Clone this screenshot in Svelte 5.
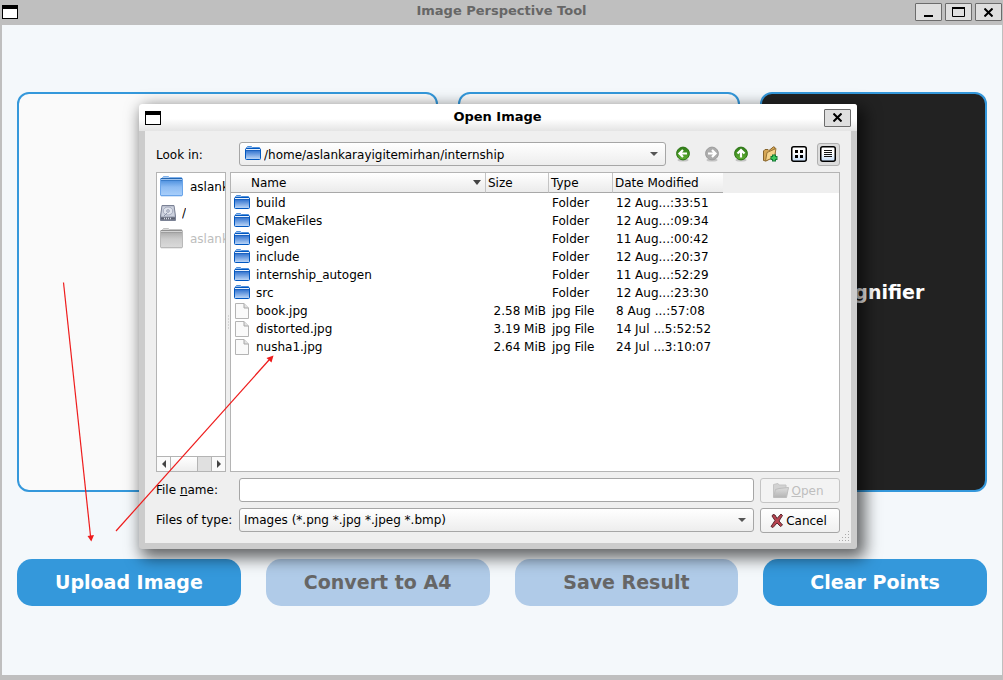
<script>
  const files = [
    { name: 'build', size: '', type: 'Folder', date: '12 Aug...:33:51' },
    { name: 'CMakeFiles', size: '', type: 'Folder', date: '12 Aug...:09:34' },
    { name: 'eigen', size: '', type: 'Folder', date: '11 Aug...:00:42' },
    { name: 'include', size: '', type: 'Folder', date: '12 Aug...:20:37' },
    { name: 'internship_autogen', size: '', type: 'Folder', date: '11 Aug...:52:29' },
    { name: 'src', size: '', type: 'Folder', date: '12 Aug...:23:30' },
    { name: 'book.jpg', size: '2.58 MiB', type: 'jpg File', date: '8 Aug ...:57:08' },
    { name: 'distorted.jpg', size: '3.19 MiB', type: 'jpg File', date: '14 Jul ...5:52:52' },
    { name: 'nusha1.jpg', size: '2.64 MiB', type: 'jpg File', date: '24 Jul ...3:10:07' }
  ];
  let fileName = $state('');
</script>

{#snippet windowIcon()}
  <svg class="window-icon" width="16" height="14" viewBox="0 0 16 14" aria-hidden="true">
    <rect x="0.5" y="0.5" width="15" height="13" fill="#fff" stroke="#000" />
    <rect width="16" height="4" />
  </svg>
{/snippet}

{#snippet cross()}
  <svg width="9" height="9" viewBox="0 0 9 9" aria-hidden="true">
    <path d="M0.5 0.5L8.500 8.500M8.500 0.500L0.500 8.500" stroke="#000" stroke-width="2" />
  </svg>
{/snippet}

{#snippet folder()}
  <svg width="16" height="16" viewBox="0 0 16 16" aria-hidden="true">
    <path d="M1.5 3V1.5L2.5 0.5H6.5L7.5 1.5H14.5V3" fill="#8db9ee" stroke="#4f90dc" />
    <rect x="0.5" y="2.500" width="15" height="11" rx="1" fill="url(#folder-blue)" stroke="#0057c0" />
    <path d="M1 3.500H15" stroke="#e8f1fc" />
    <path d="M1 4.500H15" stroke="#1c62c0" />
  </svg>
{/snippet}

{#snippet bigFolder(fill, line, tab, dark)}
  <svg width="24" height="22" viewBox="0 0 24 22" aria-hidden="true">
    <path d="M2.5 3V1.5L3.500 0.500H8.5L9.500 1.5H21.5V3" fill={tab} stroke={line} stroke-opacity=".8" />
    <rect x="0.5" y="2.5" width="22" height="17" rx="0.500" {fill} stroke={line} />
    <path d="M1 2.5H22" stroke={dark} />
    <path d="M1 3.5H22" stroke="#fff" stroke-opacity=".5" />
    <path d="M1 4.500H22" stroke={dark} stroke-opacity=".5" />
    <path d="M1 20.5H22" stroke={line} stroke-opacity=".3" />
  </svg>
{/snippet}

{#snippet roundArrow(ring, fill, turn)}
  <svg width="16" height="16" viewBox="0 0 16 16" aria-hidden="true">
    <ellipse cx="8" cy="14" rx="5.500" ry="1.500" fill="#000" fill-opacity=".18" />
    <circle cx="8" cy="7.5" r="6.4" {fill} stroke={ring} />
    <path d="M12 7.5H5M8 4L4.5 7.5L8 11" transform="rotate({turn} 8 7.5)" fill="none" stroke="#fff" stroke-width="2.2" />
  </svg>
{/snippet}

<svg class="defs" width="0" height="0" aria-hidden="true">
  <defs>
    <linearGradient id="folder-blue" x1="0" y1="0" x2="0" y2="1">
      <stop offset="0.1" stop-color="#2268cb" /><stop offset="1" stop-color="#c2daf8" />
    </linearGradient>
    <linearGradient id="folder-big" x1="0" y1="0" x2="0" y2="1">
      <stop offset="0" stop-color="#3f86da" /><stop offset="0.5" stop-color="#8dbcf3" /><stop offset="1" stop-color="#a9cffb" />
    </linearGradient>
    <linearGradient id="folder-grey" x1="0" y1="0" x2="0" y2="1">
      <stop offset="0" stop-color="#a4a4a4" /><stop offset="0.5" stop-color="#cccccc" /><stop offset="1" stop-color="#dadada" />
    </linearGradient>
    <linearGradient id="folder-open" x1="0" y1="0" x2="0" y2="1">
      <stop offset="0" stop-color="#ddd" /><stop offset="1" stop-color="#b4b4b4" />
    </linearGradient>
    <linearGradient id="arrow-green" x1="0" y1="0" x2="0" y2="1">
      <stop offset="0" stop-color="#2f7d18" /><stop offset="1" stop-color="#5fae32" />
    </linearGradient>
    <linearGradient id="view-blue" x1="0" y1="0" x2="0" y2="1">
      <stop offset="0.4" stop-color="#fff" /><stop offset="1" stop-color="#c5ddf8" />
    </linearGradient>
  </defs>
</svg>

<div class="window">
  <header class="title-bar">
    {@render windowIcon()}
    <h1>Image Perspective Tool</h1>
    <div class="window-buttons">
      <button class="frame-button" aria-label="Minimize">
        <svg width="9" height="9" viewBox="0 0 9 9" aria-hidden="true"><path d="M0 8H9" stroke="#000" stroke-width="2" /></svg>
      </button>
      <button class="frame-button" aria-label="Maximize">
        <svg width="13" height="10" viewBox="0 0 13 10" aria-hidden="true"><path d="M0.5 1V9.5H12.5V1" fill="none" stroke="#000" /><path d="M0 1H13" stroke="#000" stroke-width="2" /></svg>
      </button>
      <button class="frame-button" aria-label="Close">{@render cross()}</button>
    </div>
  </header>

  <main class="workspace">
    <div class="panels">
      <section class="panel"></section>
      <section class="panel"></section>
      <section class="panel magnifier">Magnifier</section>
    </div>
    <div class="actions">
      <button class="action">Upload Image</button>
      <button class="action" disabled>Convert to A4</button>
      <button class="action" disabled>Save Result</button>
      <button class="action">Clear Points</button>
    </div>
  </main>

  <div class="dialog" role="dialog" aria-labelledby="dialog-title">
    <header class="dialog-title">
      {@render windowIcon()}
      <h2 id="dialog-title">Open Image</h2>
      <button class="frame-button" aria-label="Close dialog">{@render cross()}</button>
    </header>

    <div class="dialog-body">
      <div class="look-in">
        <label for="look-in">Look in:</label>
        <div class="combo with-icon">
          {@render folder()}
          <select id="look-in"><option>/home/aslankarayigitemirhan/internship</option></select>
        </div>
        <div class="tools">
          <button class="tool" aria-label="Back">{@render roundArrow('#2c7414', 'url(#arrow-green)', 0)}</button>
          <button class="tool" aria-label="Forward">{@render roundArrow('#9c9c9c', '#acacac', 180)}</button>
          <button class="tool" aria-label="Parent directory">{@render roundArrow('#2c7414', 'url(#arrow-green)', 90)}</button>
          <button class="tool" aria-label="Create new folder">
            <svg width="16" height="16" viewBox="0 0 16 16" aria-hidden="true">
              <path d="M1.5 14.5V5L3 3.5H6L7 4.5L11.5 0.8L13 1.5V10L4 15Z" fill="#d5a655" stroke="#86642c" />
              <path d="M3.500 15L5 6.5L14 2.5L12.500 11Z" fill="#f5d38a" stroke="#9a7536" />
              <path d="M12 8.5V15.5M8.500 12H15.500" stroke="#147a35" stroke-width="4" />
              <path d="M12 9.5V14.5M9.500 12H14.500" stroke="#3ec85d" stroke-width="2" />
            </svg>
          </button>
          <button class="tool" aria-label="List view">
            <svg width="16" height="16" viewBox="0 0 16 16" aria-hidden="true">
              <rect x="0.75" y="0.75" width="14.5" height="14.5" rx="2" fill="url(#view-blue)" stroke="#000" stroke-width="1.5" />
              <path d="M4 4h3v3H4zM9 4h3v3H9zM4 9h3v3H4zM9 9h3v3H9z" />
            </svg>
          </button>
          <button class="tool pressed" aria-label="Detail view" aria-pressed="true">
            <svg width="16" height="16" viewBox="0 0 16 16" aria-hidden="true">
              <rect x="0.75" y="0.75" width="14.5" height="14.5" rx="2" fill="url(#view-blue)" stroke="#000" stroke-width="1.5" />
              <path d="M4 4.5H12M4 6.5H12M4 8.5H12M4 10.5H12" stroke="#111" />
            </svg>
          </button>
        </div>
      </div>

      <div class="browser">
        <nav class="places" aria-label="Places">
          <ul>
            <li>{@render bigFolder('url(#folder-big)', '#6aa5ea', '#a9caf0', '#2468b4')}<span>aslankarayigitemirhan</span></li>
            <li>
              <svg width="16" height="16" viewBox="0 0 16 16" aria-hidden="true">
                <path d="M2 0.5H14L15.5 11V15.5H0.5V11Z" fill="#aeb4c4" stroke="#7b8295" />
                <path d="M2.5 1.5H13.5L14.5 11H1.5Z" fill="#cdd2de" />
                <ellipse cx="8" cy="6" rx="4.8" ry="4" fill="#dfe3ec" stroke="#a4aabc" />
                <circle cx="8" cy="6" r="1.4" fill="#c3c8d6" stroke="#a4aabc" />
                <path d="M7 8L4 11" stroke="#8b93a8" />
                <path d="M1 13.5H15" stroke="#5c6272" stroke-width="2.5" />
                <path d="M4 13.5H12" stroke="#d6dae4" stroke-width="1.5" stroke-dasharray="1 1" />
              </svg>
              <span>/</span>
            </li>
            <li class="missing">{@render bigFolder('url(#folder-grey)', '#b9b9b9', '#d8d8d8', '#909090')}<span>aslankarayigit</span></li>
          </ul>
          <div class="scrollbar">
            <button aria-label="Scroll left"><svg width="4" height="8" viewBox="0 0 4 8" aria-hidden="true"><path d="M4 0V8L0 4Z" fill="#444" /></svg></button>
            <div class="track"><div class="thumb"></div></div>
            <button aria-label="Scroll right"><svg width="4" height="8" viewBox="0 0 4 8" aria-hidden="true"><path d="M0 0V8L4 4Z" fill="#444" /></svg></button>
          </div>
        </nav>
        <div class="splitter"></div>
        <div class="listing">
          <table>
            <colgroup><col class="c-name" /><col class="c-size" /><col class="c-type" /><col class="c-date" /><col /></colgroup>
            <thead>
              <tr>
                <th class="sorted">
                  <div>Name<svg width="8" height="5" viewBox="0 0 8 5" aria-hidden="true"><path d="M0 0H8L4 5Z" fill="#444" /></svg></div>
                </th>
                <th>Size</th><th>Type</th><th>Date Modified</th><td class="rest"></td>
              </tr>
            </thead>
            <tbody>
              {#each files as file}
                <tr>
                  <td>
                    <div class="file">
                      {#if file.size}
                        <svg width="16" height="16" viewBox="0 0 16 16" aria-hidden="true">
                          <path d="M1.5 0.5H10L14.5 5V15.5H1.5Z" fill="#fafafa" stroke="#b4b4b4" />
                          <path d="M10 0.5V5H14.5" fill="#e2e2e2" stroke="#a8a8a8" />
                        </svg>
                      {:else}
                        {@render folder()}
                      {/if}
                      <span>{file.name}</span>
                    </div>
                  </td>
                  <td class="size">{file.size}</td>
                  <td>{file.type}</td>
                  <td>{file.date}</td>
                  <td></td>
                </tr>
              {/each}
            </tbody>
          </table>
        </div>
      </div>

      <div class="fields">
        <label for="file-name">File <u>n</u>ame:</label>
        <input id="file-name" type="text" bind:value={fileName} />
        <button class="push" disabled>
          <svg width="16" height="16" viewBox="0 0 16 16" aria-hidden="true">
            <path d="M0.5 14V1.5L5 0.5L6 2H13V5" fill="#d2d2d2" stroke="#c4c4c4" />
            <path d="M0.5 14.5L2.5 6.5L6 5.5L15.5 4.5L13.5 14.5Z" fill="url(#folder-open)" stroke="#bdbdbd" />
          </svg>
          <span><u>O</u>pen</span>
        </button>
        <label for="file-type">Files of type:</label>
        <div class="combo">
          <select id="file-type"><option>Images (*.png *.jpg *.jpeg *.bmp)</option></select>
        </div>
        <button class="push">
          <svg width="14" height="16" viewBox="0 0 14 16" aria-hidden="true">
            <path d="M3 1.5L5 2L7 5.5L11 1L12.5 2.5L9 8L12.5 12L10.5 13.5L7 10L3 14.5L1 13.5L5 7.5L2 3Z" fill="#b8434f" stroke="#5a2a30" />
          </svg>
          <span>Cancel</span>
        </button>
      </div>
      <svg class="grip" width="12" height="12" viewBox="0 0 12 12" aria-hidden="true">
        <path d="M10 1h1v1h-1zM10 4h1v1h-1zM7 4h1v1h-1zM10 7h1v1h-1zM7 7h1v1h-1zM4 7h1v1h-1zM10 10h1v1h-1zM7 10h1v1h-1zM4 10h1v1h-1zM1 10h1v1h-1z" fill="#aaa" />
      </svg>
    </div>
  </div>

  <svg class="pointers" aria-hidden="true">
    <g fill="#ee1c1c" stroke="#ee1c1c" stroke-width="1.2">
      <path d="M63.5 282.5L90.5 536" />
      <path d="M87.5 536L94 535L91.3 541.500Z" stroke="none" />
      <path d="M116 531L269 360" />
      <path d="M266.500 358L271.500 362.5L273.500 355.500Z" stroke="none" />
    </g>
  </svg>
</div>

<style>
  :global(body) { margin: 0; }
  .window, .window button, .window input, .window select {
    font-family: "DejaVu Sans", Verdana, sans-serif;
    font-size: 12px;
    color: #000;
  }
  .window {
    position: relative;
    box-sizing: border-box;
    min-height: 100vh;
    display: flex;
    flex-direction: column;
    background: #f4f8fb;
    border: solid #bfbfbf;
    border-width: 0 1px 5px 2px;
    overflow: hidden;
  }
  .defs { position: absolute; }
  svg { display: block; flex: none; }
  button { margin: 0; padding: 0; }
  h1, h2 { flex: 1; margin: 0; font-size: 13px; line-height: 16px; font-weight: bold; text-align: center; }
  .title-bar { height: 25px; box-sizing: border-box; padding-bottom: 1px; display: flex; align-items: center; background: #bfbfbf; }
  h1 { color: #666; padding-left: 70px; padding-bottom: 2px; }
  h2 { padding: 0 0 2px 10px; }
  .window-buttons { display: flex; gap: 3px; }
  .frame-button {
    width: 27px; height: 18px;
    box-sizing: border-box;
    display: flex; align-items: center; justify-content: center;
    background: #dfdfdf; border: 1px solid #6c6c6c; border-radius: 1px;
  }
  .workspace {
    flex: 1;
    display: flex; flex-direction: column; justify-content: space-evenly;
    padding: 0 15px 2px;
  }
  .panels { display: grid; grid-template-columns: 421fr 282fr 227fr; gap: 20px; height: 400px; }
  .panel { box-sizing: border-box; border: 2px solid #3498db; border-radius: 12px; background: #fafafa; }
  .magnifier {
    display: flex; align-items: center; justify-content: center;
    background: #222; color: #fff; font-size: 19px; font-weight: bold;
  }
  .actions { display: grid; grid-template-columns: repeat(4, 1fr); gap: 25px; }
  .window .action {
    height: 47px; border: 0; border-radius: 15px; padding-bottom: 2px;
    background: #3498db; color: #fff; font-size: 19px; font-weight: bold;
  }
  .window .action:disabled { background: #b0cbe8; color: #666; }

  .dialog {
    position: absolute; left: 137px; top: 104px; width: 718px;
    border-radius: 3px;
    background: #ccc;
    box-shadow: 5px 6px 16px 3px rgba(0, 0, 0, 0.6);
  }
  .dialog-title {
    height: 27px; display: flex; align-items: center; padding: 0 6px;
    box-sizing: border-box;
    border-radius: 3px 3px 0 0;
    background: linear-gradient(#fff 55%, #e4e4e4);
  }
  .dialog-body {
    position: relative;
    margin: 0 6px 6px; padding: 11px;
    display: flex; flex-direction: column; gap: 6px;
    background: #efefef;
  }
  .look-in { display: grid; grid-template-columns: 77px 1fr auto; column-gap: 6px; align-items: center; }
  .look-in label, .look-in select { padding-top: 2px; }
  .tools { display: flex; gap: 6px; }
  .tool {
    width: 23px; height: 23px; box-sizing: border-box;
    display: flex; align-items: center; justify-content: center;
    padding: 0 1px 1px 0;
    border: 1px solid transparent; border-radius: 3px; background: none;
  }
  .tool.pressed { background: #dcdcdc; border-color: #b0b0b0; }
  .combo {
    height: 24px; box-sizing: border-box;
    display: flex; align-items: center;
    border: 1px solid #a6a6a6; border-radius: 3px;
    background: linear-gradient(#fff, #ededed);
  }
  .with-icon { padding-left: 5px; }
  .combo select {
    appearance: none; flex: 1; min-width: 0; height: 22px;
    border: 0; padding: 0 4px; outline: 0;
    background: no-repeat right 7px center / 8px 4px url("data:image/svg+xml,%3Csvg xmlns='http://www.w3.org/2000/svg' viewBox='0 0 8 4'%3E%3Cpath d='M0 0H8L4 4Z' fill='%23555'/%3E%3C/svg%3E");
  }
  .with-icon select { padding: 2px 4px 0 3px; }

  .browser { display: flex; height: 300px; }
  .places, .listing { box-sizing: border-box; border: 1px solid #b4b4b4; background: #fff; overflow: hidden; }
  .places { width: 70px; display: flex; flex-direction: column; }
  .places ul { flex: 1; margin: 0; padding: 1px 0 0 3px; list-style: none; }
  .places li { display: flex; align-items: center; gap: 6px; height: 26px; white-space: nowrap; }
  .places span { min-width: 0; overflow: hidden; }
  .missing { color: #bdbdbd; }
  .scrollbar { display: flex; height: 14px; border-top: 1px solid #b4b4b4; }
  .scrollbar button {
    width: 13px; display: flex; align-items: center; justify-content: center;
    border: 0; background: #fafafa;
  }
  .track { flex: 1; background: #e0e0e0; border: solid #b4b4b4; border-width: 0 1px; }
  .thumb { width: 26px; height: 14px; border-right: 1px solid #b4b4b4; background: linear-gradient(#fff, #eee); }
  .splitter {
    width: 4px;
    background: radial-gradient(circle, #b8b8b8 0.5px, transparent 1px) center / 3px 3px no-repeat;
    background-repeat: repeat-y;
    background-clip: content-box;
    box-sizing: border-box;
    padding: 142px 0;
  }
  .listing { flex: 1; }
  table { width: 100%; table-layout: fixed; border-collapse: separate; border-spacing: 0; }
  .c-name { width: 255px; }
  .c-size { width: 63px; }
  .c-type { width: 64px; }
  .c-date { width: 110px; }
  th, td { padding: 0 0 0 3px; white-space: nowrap; overflow: hidden; text-align: left; font-weight: normal; }
  th {
    height: 19px; padding: 0 0 0 2px;
    background: linear-gradient(#fff, #ebebeb);
    border-right: 1px solid #c4c4c4; border-bottom: 1px solid #a8a8a8;
  }
  th:nth-child(4) { border-right: 0; }
  .rest { background: #efefef; }
  .sorted div { display: flex; align-items: center; justify-content: space-between; padding: 0 4px 0 18px; }
  tbody td { height: 18px; line-height: 16px; padding-top: 2px; box-sizing: border-box; }
  td.size { padding: 2px 3px 0 0; text-align: right; }
  .file { display: flex; align-items: center; gap: 6px; }

  .fields { display: grid; grid-template-columns: 77px 1fr 80px; gap: 6px; align-items: center; }
  .fields label, .look-in label { white-space: nowrap; }
  .fields input {
    height: 24px; box-sizing: border-box; min-width: 0; width: 100%; padding: 0 4px;
    border: 1px solid #a6a6a6; border-radius: 3px; background: #fff; outline: 0;
  }
  .push {
    height: 25px; margin-bottom: -1px; box-sizing: border-box;
    display: flex; align-items: center; justify-content: center; gap: 2px;
    padding: 1px 3px 0 0;
    border: 1px solid #a6a6a6; border-radius: 3px; background: linear-gradient(#fff, #f0f0f0);
  }
  .window .push:disabled { color: #bebebe; border-color: #c4c4c4; background: #f3f3f3; }
  .grip { position: absolute; right: 1px; bottom: 1px; }
  .pointers { position: absolute; left: -2px; top: 0; width: 100%; height: 100%; pointer-events: none; }
</style>
